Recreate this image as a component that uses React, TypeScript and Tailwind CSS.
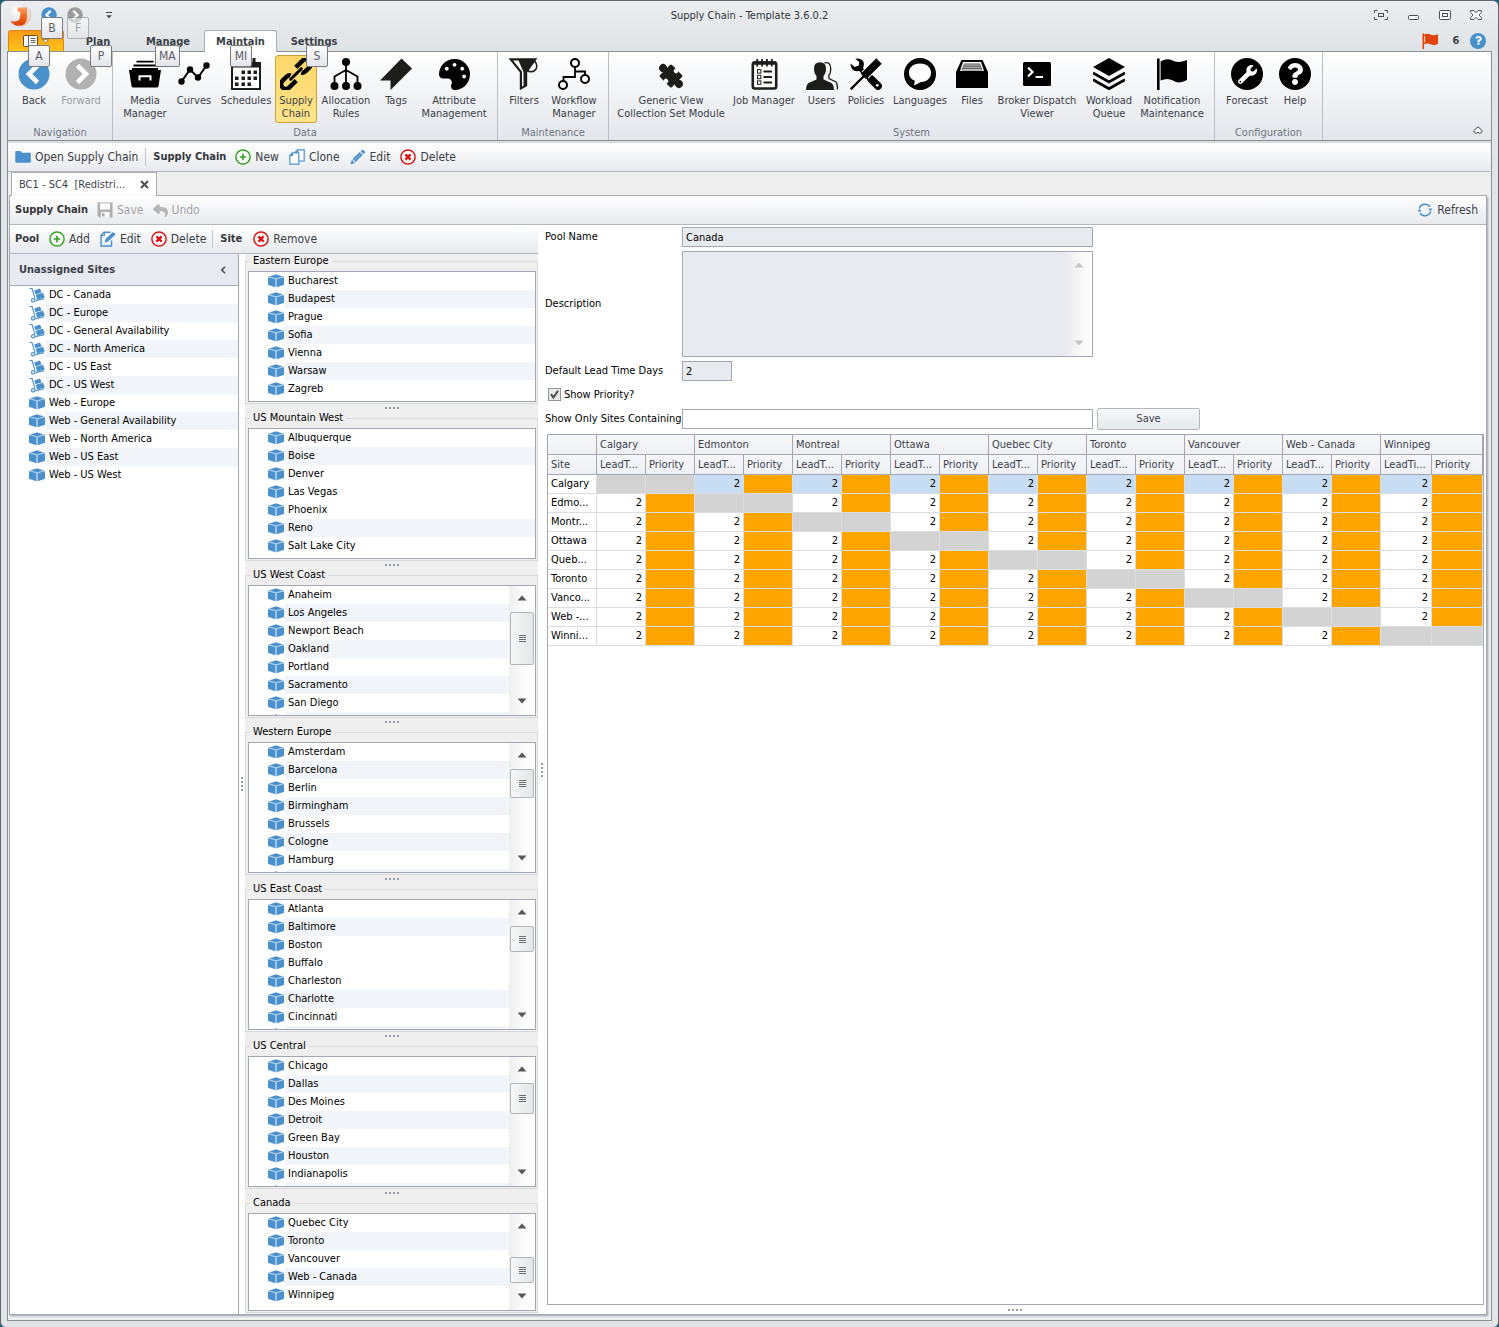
import type { ReactNode } from "react";
import { FaPalette, FaWrench, FaQuestion, FaReply } from "react-icons/fa";

const BLUE = "#4a90cc";

/* ---------- small icons ---------- */

function Cube() {
  return (
    <svg viewBox="0 0 16 16" className="h-4 w-4 shrink-0">
      <path d="M8 1.2 15.6 3.6 15.6 12 8 14.4 0.4 12 0.4 3.6Z" fill="#b3d0ea" />
      <path d="M8 1.5 14.4 3.4 8 5.3 1.6 3.4Z" fill={BLUE} />
      <path d="M0 4.2 7.2 6.2V14L0 11.8Z" fill={BLUE} />
      <path d="M16 4.2 8.8 6.2V14L16 11.8Z" fill={BLUE} />
    </svg>
  );
}

function HandTruck() {
  return (
    <svg viewBox="0 0 16 16" className="h-4 w-4 shrink-0">
      <path d="M0.5 1.5H3L6 11.5" fill="none" stroke={BLUE} strokeWidth="1.1" />
      <circle cx="4.2" cy="13.3" r="1.7" fill="none" stroke={BLUE} strokeWidth="1.2" />
      <path d="M6.3 13.6 15 11.6" stroke={BLUE} strokeWidth="1.2" />
      <path d="M5.3 3.4 11 1.6 12.6 5.4 6.5 7.2Z" fill={BLUE} />
      <path d="M6.8 7.8 14 5.8 15.8 10.6 8 12.6Z" fill={BLUE} />
    </svg>
  );
}

function PlusCircle() {
  return (
    <svg viewBox="0 0 16 16" className="h-4 w-4 shrink-0">
      <circle cx="8" cy="8" r="7.1" fill="#fff" stroke="#35a320" strokeWidth="1.5" />
      <path d="M8 4.8V11.2M4.8 8H11.2" stroke="#35a320" strokeWidth="1.7" />
    </svg>
  );
}

function CrossCircle() {
  return (
    <svg viewBox="0 0 16 16" className="h-4 w-4 shrink-0">
      <circle cx="8" cy="8" r="7.1" fill="#fff" stroke="#dd1111" strokeWidth="1.5" />
      <path d="M5.4 5.4 10.6 10.6M10.6 5.4 5.4 10.6" stroke="#dd1111" strokeWidth="2.4" />
    </svg>
  );
}

function Folder() {
  return (
    <svg viewBox="0 0 16 16" className="h-4 w-4 shrink-0">
      <path d="M0.3 3Q0.3 2 1.3 2H5.5L7 3.8H14.8Q15.8 3.8 15.8 4.8V12.8Q15.8 13.8 14.8 13.8H1.3Q0.3 13.8 0.3 12.8Z" fill={BLUE} />
    </svg>
  );
}

function Copy() {
  return (
    <svg viewBox="0 0 16 16" className="h-4 w-4 shrink-0" fill="#fff" stroke={BLUE} strokeWidth="1.2">
      <path d="M8.6 0.8H15.2V12H6.2V3.2Z" />
      <path d="M6.2 3.2H8.6V0.8" fill="none" />
      <path d="M3.4 3.8H9.8V15.2H0.8V6.4Z" />
      <path d="M0.8 6.4H3.4V3.8" fill="none" />
    </svg>
  );
}

function Pencil() {
  return (
    <svg viewBox="0 0 16 16" className="h-4 w-4 shrink-0">
      <path d="M0.4 15.4 1.8 10.8 4.9 13.9Z" fill={BLUE} />
      <path d="M2.6 10 9.8 3 12.7 5.9 5.6 13Z" fill={BLUE} />
      <path d="M10.6 2.2 12 0.9Q12.7 0.4 13.4 1L14.9 2.4Q15.4 3.1 14.9 3.8L13.5 5.1Z" fill={BLUE} />
      <path d="M4 11.6 11.2 4.5" stroke="#8fbce2" strokeWidth="0.8" />
    </svg>
  );
}

function EditPage() {
  return (
    <svg viewBox="0 0 16 16" className="h-4 w-4 shrink-0">
      <path d="M10.5 1.2H4.2L1 4.4V15H11.5V9.5" fill="none" stroke={BLUE} strokeWidth="1.4" />
      <path d="M1 4.6H4.4V1.2" fill="none" stroke={BLUE} strokeWidth="1" />
      <path d="M4.6 11.4 5.6 8 12.3 1.6Q13.2 1 14 1.7L14.8 2.6Q15.4 3.4 14.7 4.2L8 10.5Z" fill={BLUE} />
    </svg>
  );
}

function Floppy() {
  return (
    <svg viewBox="0 0 16 16" className="h-4 w-4 shrink-0">
      <path d="M0.5 0.5H15.5V15.5H2.5L0.5 13.5Z" fill="#b0b0b0" />
      <rect x="3" y="1.5" width="10" height="6" fill="#fff" />
      <rect x="4" y="10" width="8.5" height="5.5" fill="#fff" />
      <rect x="5" y="11" width="2.5" height="3.5" fill="#b0b0b0" />
    </svg>
  );
}

function RefreshIcon() {
  return (
    <svg viewBox="0 0 16 16" className="h-4 w-4 shrink-0" fill="none" stroke={BLUE} strokeWidth="1.6">
      <path d="M2.3 6.6A6 6 0 0 1 13 4.8" />
      <path d="M13.7 9.4A6 6 0 0 1 3 11.2" />
      <path d="M11.2 6.4H15.6L13.6 9Z" fill={BLUE} stroke="none" />
      <path d="M4.8 9.6H0.4L2.4 7Z" fill={BLUE} stroke="none" />
    </svg>
  );
}

function Arrow({ color, dir, className }: { color: string; dir: "left" | "right"; className: string }) {
  return (
    <svg viewBox="0 0 32 32" className={className}>
      <circle cx="16" cy="16" r="15.5" fill={color} />
      <path d={dir === "left" ? "M19.5 7.5 11 16 19.5 24.5" : "M12.5 7.5 21 16 12.5 24.5"} fill="none" stroke="#fff" strokeWidth="4.6" />
    </svg>
  );
}

/* ---------- ribbon icons (32px) ---------- */

function Big({ children }: { children: ReactNode }) {
  return (
    <svg viewBox="0 0 32 32" className="h-8 w-8 shrink-0">
      {children}
    </svg>
  );
}

const icons: Record<string, ReactNode> = {
  media: (
    <Big>
      <path d="M7.5 2.8H24.5V4.4H7.5ZM4.5 6.4H27.5V8.4H4.5Z" />
      <path d="M3 10H29V12H32L29.5 28Q29.3 29.5 27.8 29.5H4.2Q2.7 29.5 2.5 28L0 12H3Z" />
      <path d="M10.5 22.5V18.3H21.5V22.5" fill="none" stroke="#fff" strokeWidth="2" />
    </Big>
  ),
  curves: (
    <Big>
      <path d="M3.5 23.5 12 11.5 20 19.5 28.5 7.5" fill="none" stroke="#000" strokeWidth="2" />
      <circle cx="3.5" cy="23.5" r="3.2" />
      <circle cx="12" cy="11.5" r="3.2" />
      <circle cx="20" cy="19.5" r="3.2" />
      <circle cx="28.5" cy="7.5" r="3.2" />
    </Big>
  ),
  schedules: (
    <Big>
      <path d="M2 5H30V31H2Z" fill="#fff" stroke="#1d1d1b" strokeWidth="2" />
      <path d="M1 4H31V9.5H1Z" fill="#1d1d1b" />
      <path d="M7 0H10V6H7ZM22.5 0H25.5V6H22.5Z" fill="#1d1d1b" />
      <path
        d="M11.5 12.5h3.5v3.5h-3.5zM17.5 12.5h3.5v3.5h-3.5zM23.5 12.5h3.5v3.5h-3.5zM5 18.5h3.5v3.5h-3.5zM11.5 18.5h3.5v3.5h-3.5zM17.5 18.5h3.5v3.5h-3.5zM23.5 18.5h3.5v3.5h-3.5zM5 24.5h3.5v3.5h-3.5zM11.5 24.5h3.5v3.5h-3.5zM17.5 24.5h3.5v3.5h-3.5z"
        fill="#1d1d1b"
      />
    </Big>
  ),
  chain: (
    <Big>
      <g fill="none" stroke="#000" strokeWidth="4.4" transform="rotate(-45 16 16)">
        <path d="M11.5 20.8H1.5Q-3 20.5 -3 16T1.5 11.2H7.5Q10.5 11.5 11.2 13.2" />
        <path d="M20.5 11.2H30.5Q35 11.5 35 16T30.5 20.8H24.5Q21.5 20.5 20.8 18.8" />
        <path d="M8.5 16H23.5" strokeWidth="3" strokeLinecap="round" />
      </g>
    </Big>
  ),
  allocation: (
    <Big>
      <path d="M16 4V28M16 12 4.5 18.5V28M16 12 27.5 18.5V28" fill="none" stroke="#000" strokeWidth="1.8" />
      <circle cx="16" cy="4" r="4" />
      <circle cx="4.5" cy="28" r="4" />
      <circle cx="16" cy="28" r="4" />
      <circle cx="27.5" cy="28" r="4" />
    </Big>
  ),
  tags: (
    <Big>
      <path d="M21.5 0.5 32 10.5 10.5 32V22.5H0Z" fill="#1d1d1b" />
    </Big>
  ),
  palette: (
    <span className="flex h-8 w-8 items-center justify-center">
      <FaPalette size={31} color="#000" className="-scale-x-100" />
    </span>
  ),
  filters: (
    <Big>
      <circle cx="23" cy="8" r="5.8" fill="none" stroke="#1d1d1b" strokeWidth="1.5" />
      <path d="M2 1H28L18.5 14V27.5L12.5 31V14Z" fill="#1d1d1b" stroke="#1d1d1b" strokeWidth="1.4" />
      <path d="M5 2.5H10.5L15.5 14V27.8L14 28.6V13.6Z" fill="#fff" />
    </Big>
  ),
  workflow: (
    <Big>
      <path d="M17 9V19H5.5V23M17 13.5H27V17" fill="none" stroke="#000" strokeWidth="1.8" />
      <g fill="#fff" stroke="#000" strokeWidth="2">
        <circle cx="17" cy="5" r="4" />
        <circle cx="5" cy="27" r="4" />
        <circle cx="27" cy="21" r="4" />
      </g>
    </Big>
  ),
  puzzle: (
    <Big>
      <g transform="rotate(-45 16 18)" fill="#1d1d1b">
        <rect x="7.5" y="9.5" width="17" height="17" rx="1.5" />
        <circle cx="16" cy="6.8" r="4" />
        <circle cx="16" cy="29.2" r="4" />
        <circle cx="8.8" cy="18" r="2.4" fill="#f6f7f9" />
        <circle cx="23.2" cy="18" r="2.4" fill="#f6f7f9" />
      </g>
    </Big>
  ),
  jobs: (
    <Big>
      <rect x="4.8" y="4.5" width="23.4" height="26" rx="2" fill="#fff" stroke="#1d1d1b" strokeWidth="2.6" />
      <path d="M5 5H28" stroke="#1d1d1b" strokeWidth="3.5" />
      <path d="M9.2 1V8.5M14 1V8.5M19 1V8.5M23.8 1V8.5" stroke="#1d1d1b" strokeWidth="1.8" />
      <path d="M15.5 13.5H24M15.5 19H24M15.5 24.5H24" stroke="#1d1d1b" strokeWidth="2" />
      <g fill="none" stroke="#1d1d1b">
        <rect x="9.5" y="11.7" width="3.4" height="3.4" />
        <rect x="9.5" y="17.3" width="3.4" height="3.4" />
        <rect x="9.5" y="22.9" width="3.4" height="3.4" />
      </g>
    </Big>
  ),
  users: (
    <Big>
      <path
        d="M18.5 4.8Q24.5 3.5 24.7 10.5 24.8 15.5 22.8 17.3L23 20.5 30 24Q31.4 25.5 31.4 31.5"
        fill="none"
        stroke="#1d1d1b"
        strokeWidth="1.3"
      />
      <path
        d="M14 4.2Q20 4.2 20 10.5 20 15.5 17.5 18V21.5L25 24.8Q28 26.5 28 32H0Q0 26.5 3 24.8L10.5 21.5V18Q8 15.5 8 10.5 8 4.2 14 4.2Z"
        fill="#1d1d1b"
      />
    </Big>
  ),
  policies: (
    <Big>
      <path d="M8.5 9 26.5 26.5" stroke="#000" strokeWidth="4.6" />
      <path d="M21 21 28 28" stroke="#000" strokeWidth="7.6" strokeLinecap="round" />
      <path d="M5.4 0.8Q11.5 -0.4 13.6 4.3 14.6 8.6 11.8 11.4 8.2 14 4.4 12.8 0.8 11.2 0.4 5.6L4.6 9 8.8 7.4 9.2 4Z" />
      <path d="M3 29 16 16" stroke="#fff" strokeWidth="4.5" />
      <path d="M0.8 31.2 16 16" stroke="#000" strokeWidth="2.4" />
      <path d="M15 17 28 4" stroke="#fff" strokeWidth="9.6" />
      <path d="M13.5 18.5 29 3" stroke="#000" strokeWidth="7.6" />
      <circle cx="27.3" cy="27.3" r="1.4" fill="#fff" />
    </Big>
  ),
  languages: (
    <Big>
      <circle cx="16" cy="16" r="16" />
      <path d="M16 5.5C23 5.5 27 9.5 27 14.7S23 24 17 24L10 27.5 10.8 22.8C7 21.3 5 18.5 5 14.7 5 9.5 9 5.5 16 5.5Z" fill="#fff" />
    </Big>
  ),
  files: (
    <Big>
      <path d="M5.5 2H26.5L32 14V30H0V14Z" />
      <path d="M7 4H25L28 13H4Z" fill="#fff" />
      <path d="M8 5.5H24L26.5 12.5H5.5Z" fill="#555" />
      <path d="M8 7H24M7.4 9.2H24.6M6.6 11.4H25.4" stroke="#ccc" />
    </Big>
  ),
  terminal: (
    <Big>
      <rect x="2" y="4" width="28" height="24" rx="1.5" />
      <path d="M7 9.5 11.5 14 7 18.5M14.5 19H22" fill="none" stroke="#fff" strokeWidth="2.2" />
    </Big>
  ),
  layers: (
    <Big>
      <path d="M16 0 32 9 16 18 0 9Z" />
      <path d="M0 15 16 24 32 15M0 21.7 16 30.7 32 21.7" fill="none" stroke="#000" strokeWidth="2.8" />
    </Big>
  ),
  flag: (
    <Big>
      <path d="M1 0.5H3.6V32H1Z" />
      <path d="M4.6 3.5Q11-0.5 16.5 2.5 22 5.5 31 2V22Q23 26.5 17 22.5 11.5 19.5 4.6 22.5Z" />
    </Big>
  ),
  forecast: (
    <span className="flex h-8 w-8 items-center justify-center rounded-full bg-black">
      <FaWrench size={19} color="#fff" />
    </span>
  ),
  help: (
    <span className="flex h-8 w-8 items-center justify-center rounded-full bg-black">
      <FaQuestion size={22} color="#fff" />
    </span>
  ),
  back: <Arrow color={BLUE} dir="left" className="h-8 w-8 shrink-0" />,
  forward: <Arrow color="#b1b1b1" dir="right" className="h-8 w-8 shrink-0" />,
};

/* ---------- ribbon ---------- */

type Item = { icon: string; lines: string[]; w: string; on?: boolean; off?: boolean };

const groups: { name: string; w: string; pad: string; items: Item[] }[] = [
  {
    name: "Navigation",
    w: "w-[105px]",
    pad: "pl-[2px]",
    items: [
      { icon: "back", lines: ["Back"], w: "w-12" },
      { icon: "forward", lines: ["Forward"], w: "w-[46px]", off: true },
    ],
  },
  {
    name: "Data",
    w: "w-[385px]",
    pad: "pl-[7px]",
    items: [
      { icon: "media", lines: ["Media", "Manager"], w: "w-[50px]" },
      { icon: "curves", lines: ["Curves"], w: "w-12" },
      { icon: "schedules", lines: ["Schedules"], w: "w-[56px]" },
      { icon: "chain", lines: ["Supply", "Chain"], w: "w-[42px] mx-px", on: true },
      { icon: "allocation", lines: ["Allocation", "Rules"], w: "w-[56px]" },
      { icon: "tags", lines: ["Tags"], w: "w-11" },
      { icon: "palette", lines: ["Attribute", "Management"], w: "w-[72px]" },
    ],
  },
  {
    name: "Maintenance",
    w: "w-[111px]",
    pad: "pl-[6px]",
    items: [
      { icon: "filters", lines: ["Filters"], w: "w-10" },
      { icon: "workflow", lines: ["Workflow", "Manager"], w: "w-[60px]" },
    ],
  },
  {
    name: "System",
    w: "w-[606px]",
    pad: "pl-[3px]",
    items: [
      { icon: "puzzle", lines: ["Generic View", "Collection Set Module"], w: "w-[118px]" },
      { icon: "jobs", lines: ["Job Manager"], w: "w-[68px]" },
      { icon: "users", lines: ["Users"], w: "w-[47px]" },
      { icon: "policies", lines: ["Policies"], w: "w-[42px]" },
      { icon: "languages", lines: ["Languages"], w: "w-[66px]" },
      { icon: "files", lines: ["Files"], w: "w-[38px]" },
      { icon: "terminal", lines: ["Broker Dispatch", "Viewer"], w: "w-[92px]" },
      { icon: "layers", lines: ["Workload", "Queue"], w: "w-[52px]" },
      { icon: "flag", lines: ["Notification", "Maintenance"], w: "w-[74px]" },
    ],
  },
  {
    name: "Configuration",
    w: "w-[108px]",
    pad: "pl-[6px]",
    items: [
      { icon: "forecast", lines: ["Forecast"], w: "w-[52px]" },
      { icon: "help", lines: ["Help"], w: "w-11" },
    ],
  },
];

function RibbonItem({ item }: { item: Item }) {
  return (
    <button
      disabled={item.off}
      className={
        "flex h-[68px] shrink-0 flex-col items-center rounded-[3px] border pt-[2px] leading-[13px] " +
        item.w +
        (item.on ? " border-[#c9a13c] bg-gradient-to-b from-[#fdd667] to-[#fee48a]" : " border-transparent") +
        (item.off ? " text-[#9a9da1]" : " text-[#3b3f4a]")
      }
    >
      {icons[item.icon]}
      <span className="mt-1 flex flex-col items-center whitespace-nowrap">
        {item.lines.map((l) => (
          <span key={l}>{l}</span>
        ))}
      </span>
    </button>
  );
}

function Ribbon() {
  return (
    <section className="relative flex h-[89px] border-b border-[#8b9095] bg-gradient-to-b from-white to-[#e3e6eb]">
      {groups.map((g) => (
        <div key={g.name} className={"flex shrink-0 flex-col border-r border-[#b9bec5] pt-[3px] " + g.w}>
          <div className={"flex " + g.pad}>
            {g.items.map((i) => (
              <RibbonItem key={i.icon} item={i} />
            ))}
          </div>
          <div className="mt-[3px] text-center leading-[13px] text-[#6d7585]">{g.name}</div>
        </div>
      ))}
      <button aria-label="Collapse ribbon" className="absolute right-2 bottom-1.5">
        <svg viewBox="0 0 10 8" className="h-2 w-2.5" fill="#fff" stroke="#3b3f4a">
          <path d="M5 0.8 9.3 4.8 7.6 7.2H6.2L5 6 3.8 7.2H2.4L0.7 4.8Z" />
        </svg>
      </button>
    </section>
  );
}

function KeyTip({ label, className }: { label: string; className: string }) {
  return (
    <span
      className={
        "absolute z-10 flex h-[22px] min-w-[22px] items-center justify-center rounded-[2px] border border-[#777b80] bg-gradient-to-b from-white to-[#e4e5ea] px-[3px] text-[12px] text-[#5c5f66] " +
        className
      }
    >
      {label}
    </span>
  );
}

const tabs = [
  { label: "Plan", w: "w-[68px]", tip: "P", tipPos: "left-[26px]" },
  { label: "Manage", w: "w-[72px]", tip: "MA", tipPos: "left-[23px]" },
  { label: "Maintain", w: "w-[73px]", tip: "MI", tipPos: "left-[25px]", on: true },
  { label: "Settings", w: "w-[74px]", tip: "S", tipPos: "left-[29px]" },
];

function TitleBar() {
  return (
    <header className="relative flex h-[29px] items-center justify-center text-[#2f3338]">
      <div className="absolute top-0 left-0 flex h-full w-[120px]">
        <svg viewBox="0 0 24 24" className="mt-[2px] ml-[7px] h-6 w-6">
          <defs>
            <radialGradient id="orb" cx="0.35" cy="0.3" r="0.8">
              <stop offset="0" stopColor="#ffffff" />
              <stop offset="0.7" stopColor="#e0dee0" />
              <stop offset="1" stopColor="#e9b9a0" />
            </radialGradient>
            <linearGradient id="orbMark" x1="0" y1="0" x2="0" y2="1">
              <stop offset="0" stopColor="#f9a066" />
              <stop offset="0.5" stopColor="#f26a1d" />
              <stop offset="1" stopColor="#d63c06" />
            </linearGradient>
          </defs>
          <circle cx="12" cy="12" r="11.5" fill="url(#orb)" />
          <path d="M9.5 4.5H19V15Q18.5 22.5 11 22.8 5 22.5 2.5 18 8.5 19.5 11.5 16.5 12.5 14 12.2 9 11 8.5 9.5 8Z" fill="url(#orbMark)" />
        </svg>
        <button aria-label="Back" className="mt-[6px] ml-[9px] h-4 w-4">
          <Arrow color={BLUE} dir="left" className="h-4 w-4" />
        </button>
        <button aria-label="Forward" className="mt-[6px] ml-[10px] h-4 w-4">
          <Arrow color="#9c9c9c" dir="right" className="h-4 w-4" />
        </button>
        <button aria-label="Customize quick access" className="mt-[10px] ml-[22px] h-2 w-2">
          <svg viewBox="0 0 8 8" className="h-2 w-2">
            <path d="M1 1.5H7" stroke="#444" />
            <path d="M1.2 4.2H6.8L4 7.2Z" fill="#444" />
          </svg>
        </button>
        <KeyTip label="B" className="top-4 left-10" />
        <KeyTip label="F" className="top-4 left-[66px] opacity-50" />
      </div>
      <h1>Supply Chain - Template 3.6.0.2</h1>
      <div className="absolute top-0 right-4 flex h-[27px] items-center gap-[19px]">
        <button aria-label="Full screen">
          <svg viewBox="0 0 14 10" className="h-2.5 w-3.5" fill="none" stroke="#4a4e53">
            <path d="M3.5 0.5H0.5V3M0.5 7V9.5H3.5M10.5 0.5H13.5V3M13.5 7V9.5H10.5" />
            <rect x="4.5" y="3.5" width="5" height="3" />
          </svg>
        </button>
        <button aria-label="Minimize">
          <svg viewBox="0 0 13 10" className="h-2.5 w-[13px]" fill="#fff" stroke="#4a4e53">
            <rect x="1.5" y="5.5" width="10" height="4" rx="1.2" />
          </svg>
        </button>
        <button aria-label="Maximize">
          <svg viewBox="0 0 12 10" className="h-2.5 w-3" fill="#fff" stroke="#4a4e53">
            <rect x="0.5" y="0.5" width="11" height="9" rx="1" />
            <rect x="3.5" y="3.5" width="5" height="3" />
          </svg>
        </button>
        <button aria-label="Close">
          <svg viewBox="0 0 12 10" className="h-2.5 w-3" fill="#fff" stroke="#4a4e53">
            <path d="M0.6 0.6H4L6 2.8 8 0.6H11.4V2.4L9 5 11.4 7.6V9.4H8L6 7.2 4 9.4H0.6V7.6L3 5 0.6 2.4Z" />
          </svg>
        </button>
      </div>
    </header>
  );
}

function TabBar() {
  return (
    <nav className="flex h-[21px] font-bold text-[#3b3f46]">
      <button
        aria-label="Application menu"
        className="relative flex w-14 items-center justify-center gap-1 rounded-t-[3px] border border-b-0 border-[#d9861b] bg-gradient-to-b from-[#fa9a13] to-[#ffc31a]"
      >
        <svg viewBox="0 0 15 12" className="h-3 w-[15px]">
          <rect x="0.5" y="0.5" width="14" height="11" rx="1" fill="#fff" stroke="#6b4a1c" />
          <path d="M5.5 0.5V11.5M7.5 3.5H12.5M7.5 5.5H12.5M7.5 7.5H12.5" stroke="#6a6a6a" />
        </svg>
        <svg viewBox="0 0 7 5" className="h-[5px] w-[7px]">
          <path d="M0.7 0.7H6.3L3.5 4.2Z" fill="#fff" stroke="#8a5a10" strokeWidth="0.7" />
        </svg>
        <KeyTip label="A" className="top-[14px] left-[19px] font-normal" />
      </button>
      {tabs.map((t) => (
        <button
          key={t.label}
          className={
            "relative " +
            t.w +
            (t.on ? " z-10 -mb-px rounded-t-[3px] border border-b-0 border-[#a9adb4] bg-white pt-px" : " pt-[2px]")
          }
        >
          {t.label}
          <KeyTip label={t.tip} className={(t.on ? "top-[14px]" : "top-[15px]") + " font-normal " + t.tipPos} />
        </button>
      ))}
      <div className="ml-auto flex items-center gap-2 pr-[5px]">
        <svg viewBox="0 0 16 16" className="h-4 w-4">
          <path d="M0.5 0.5H2V16H0.5Z" fill="#e04408" />
          <path d="M2 1.5Q5.5-0.2 8.5 1.5 11.5 3 16 1.2V11Q12 13 8.5 11.2 5.5 9.8 2 11.2Z" fill="#e04408" />
          <path d="M2.6 3V9.5" stroke="#fff" strokeWidth="0.8" />
        </svg>
        <span className="-mr-1 w-5 text-center">6</span>
        <button aria-label="Help" className="flex h-4 w-4 items-center justify-center rounded-full bg-[#4a90cc] text-white">
          <FaQuestion size={9} />
        </button>
      </div>
    </nav>
  );
}

/* ---------- toolbars ---------- */

function Tool({ icon, label, off }: { icon: ReactNode; label: string; off?: boolean }) {
  return (
    <button disabled={off} className={"flex items-center gap-1 text-[12px] whitespace-nowrap " + (off ? "text-[#a3a3a3]" : "text-[#3b3f46]")}>
      {icon}
      {label}
    </button>
  );
}

function Separator() {
  return <span className="h-[18px] w-px shrink-0 bg-[#c3c7cc]" />;
}

const bar = "flex h-[29px] shrink-0 items-center border-b border-[#b3b7bd] bg-gradient-to-b from-white to-[#e8eaee]";
const barTitle = "text-[11px] font-bold whitespace-nowrap text-[#33363b]";

/* ---------- lists ---------- */

type Pool = { name: string; sites: string[]; next?: boolean; thumb?: string; h?: string; plain?: number[] };

const pools: Pool[] = [
  { name: "Eastern Europe", sites: ["Bucharest", "Budapest", "Prague", "Sofia", "Vienna", "Warsaw", "Zagreb"] },
  {
    name: "US Mountain West",
    sites: ["Albuquerque", "Boise", "Denver", "Las Vegas", "Phoenix", "Reno", "Salt Lake City"],
    plain: [3],
  },
  {
    name: "US West Coast",
    sites: ["Anaheim", "Los Angeles", "Newport Beach", "Oakland", "Portland", "Sacramento", "San Diego"],
    next: true,
    thumb: "mt-[6px] h-[53px]",
  },
  {
    name: "Western Europe",
    sites: ["Amsterdam", "Barcelona", "Berlin", "Birmingham", "Brussels", "Cologne", "Hamburg"],
    next: true,
    thumb: "mt-[6px] h-[29px]",
  },
  {
    name: "US East Coast",
    sites: ["Atlanta", "Baltimore", "Boston", "Buffalo", "Charleston", "Charlotte", "Cincinnati"],
    next: true,
    thumb: "mt-[6px] h-[26px]",
    plain: [3],
  },
  {
    name: "US Central",
    sites: ["Chicago", "Dallas", "Des Moines", "Detroit", "Green Bay", "Houston", "Indianapolis"],
    next: true,
    thumb: "mt-[6px] h-[31px]",
  },
  {
    name: "Canada",
    sites: ["Quebec City", "Toronto", "Vancouver", "Web - Canada", "Winnipeg"],
    thumb: "mt-[23px] h-[26px]",
    h: "h-[98px]",
  },
];

const unassigned = [
  "DC - Canada",
  "DC - Europe",
  "DC - General Availability",
  "DC - North America",
  "DC - US East",
  "DC - US West",
  "Web - Europe",
  "Web - General Availability",
  "Web - North America",
  "Web - US East",
  "Web - US West",
];

function SiteRow({ name, tinted, truck }: { name: string; tinted: boolean; truck?: boolean }) {
  return (
    <li className="flex h-[18px] items-center text-black">
      {truck ? <HandTruck /> : <Cube />}
      <span className={"ml-px h-[18px] flex-1 pl-[3px] leading-[18px] whitespace-nowrap " + (tinted ? "bg-[#f1f4f9]" : "")}>{name}</span>
    </li>
  );
}

function Triangle({ up, color }: { up?: boolean; color: string }) {
  return (
    <svg viewBox="0 0 10 6" className="h-1.5 w-2.5">
      <path d={up ? "M5 0.5 9.5 5.5H0.5Z" : "M0.5 0.5H9.5L5 5.5Z"} fill={color} />
    </svg>
  );
}

function ScrollTrack({ thumb }: { thumb: string }) {
  return (
    <div className="flex w-[26px] shrink-0 flex-col items-center bg-gradient-to-r from-[#eeeeee] via-[#fafafa] to-white pt-[9px] pb-[11px]">
      <button aria-label="Scroll up" className="flex pb-[5px]">
        <Triangle up color="#55585c" />
      </button>
      <div
        className={
          "flex w-6 shrink-0 flex-col items-center justify-center gap-px rounded-[2px] border border-[#b0b4b9] bg-gradient-to-r from-[#f7f8f8] to-[#e3e5e6] " +
          thumb
        }
      >
        <span className="h-px w-[7px] bg-[#6b6f74]" />
        <span className="h-px w-[7px] bg-[#6b6f74]" />
        <span className="h-px w-[7px] bg-[#6b6f74]" />
        <span className="h-px w-[7px] bg-[#6b6f74]" />
      </div>
      <button aria-label="Scroll down" className="mt-auto flex">
        <Triangle color="#55585c" />
      </button>
    </div>
  );
}

function Dots({ vertical }: { vertical?: boolean }) {
  return (
    <div className={"flex gap-[2px] " + (vertical ? "flex-col" : "justify-center")}>
      {[0, 1, 2, 3].map((i) => (
        <span key={i} className="h-[2px] w-[2px] bg-[#979ca6]" />
      ))}
    </div>
  );
}

function PoolBox({ pool, last }: { pool: Pool; last: boolean }) {
  return (
    <>
      <fieldset className="min-w-0 border border-[#d9dadb] pr-px pb-px pl-[2px]">
        <legend className="ml-[2px] h-[14px] px-[3px] leading-[14px] text-black">{pool.name}</legend>
        <div className={"mt-[3px] flex overflow-hidden border border-[#a2a7b3] bg-white " + (pool.h ?? "h-[131px]")}>
          <ul className="flex-1 pl-[19px]">
            {pool.sites.map((s, i) => (
              <SiteRow key={s} name={s} tinted={i % 2 === 1 && !pool.plain?.includes(i)} />
            ))}
            {pool.next && <SiteRow name="" tinted />}
          </ul>
          {pool.thumb && <ScrollTrack thumb={pool.thumb} />}
        </div>
      </fieldset>
      {!last && (
        <div className="flex h-[7px] items-center justify-center">
          <Dots />
        </div>
      )}
    </>
  );
}

/* ---------- lead time table ---------- */

const cities = ["Calgary", "Edmonton", "Montreal", "Ottawa", "Quebec City", "Toronto", "Vancouver", "Web - Canada", "Winnipeg"];
const rowLabels = ["Calgary", "Edmo...", "Montr...", "Ottawa", "Queb...", "Toronto", "Vanco...", "Web -...", "Winni..."];

const th = "whitespace-nowrap border-r border-b border-[#a2a7b3] bg-gradient-to-b from-[#f6f7fa] to-[#eef0f4] px-[3px] text-left font-normal text-[#3b3f4a]";
const td = "whitespace-nowrap border-r border-b border-[#dcdde0] p-0 px-[3px]";

function LeadTimes() {
  return (
    <table className="w-full table-fixed border-separate border-spacing-0 leading-[18px]">
      <colgroup>
        <col className="w-[49px]" />
        {cities.slice(0, 8).flatMap((c) => [<col key={c + "l"} className="w-[49px]" />, <col key={c + "p"} className="w-[49px]" />])}
        <col />
        <col />
      </colgroup>
      <thead>
        <tr className="h-5">
          <th className={th} />
          {cities.map((c) => (
            <th key={c} colSpan={2} scope="colgroup" className={th}>
              {c}
            </th>
          ))}
        </tr>
        <tr className="h-5">
          <th scope="col" className={th}>
            Site
          </th>
          {cities.flatMap((c, i) => [
            <th key={c + "l"} scope="col" className={th}>
              {i === 8 ? "LeadTi..." : "LeadT..."}
            </th>,
            <th key={c + "p"} scope="col" className={th}>
              Priority
            </th>,
          ])}
        </tr>
      </thead>
      <tbody>
        {cities.map((row, r) => (
          <tr key={row} className="h-[19px]">
            <th scope="row" title={row} className={td + " text-left font-normal text-black"}>
              {rowLabels[r]}
            </th>
            {cities.flatMap((c, k) =>
              k === r
                ? [<td key={c + "l"} className={td + " bg-[#d3d3d3]"} />, <td key={c + "p"} className={td + " bg-[#d3d3d3]"} />]
                : [
                    <td key={c + "l"} className={td + " text-right text-black" + (r === 0 ? " bg-[#c7ddf4]" : "")}>
                      2
                    </td>,
                    <td key={c + "p"} className={td + " bg-[#ffa500]"} />,
                  ],
            )}
          </tr>
        ))}
      </tbody>
    </table>
  );
}

const field = "h-5 border border-[#a2a7b3] px-[3px] text-black outline-none";

function Details() {
  return (
    <main className="flex min-w-0 flex-1 flex-col pr-[2px] text-black">
      <div className="grid grid-cols-[137px_411px_auto] items-center justify-start gap-y-1 pt-[2px] whitespace-nowrap">
        <label htmlFor="pool">Pool Name</label>
        <input id="pool" readOnly defaultValue="Canada" className={field + " bg-[#e7eaef]"} />
        <span />
        <label htmlFor="desc">Description</label>
        <div className="flex h-[106px] border border-[#a2a7b3] bg-[#e7eaef]">
          <textarea id="desc" readOnly className="h-full flex-1 resize-none bg-transparent outline-none" />
          <div className="flex w-[26px] flex-col items-center justify-between bg-gradient-to-r from-[#ececee] to-white py-[10px]">
            <Triangle up color="#c3c5c8" />
            <Triangle color="#c3c5c8" />
          </div>
        </div>
        <span />
        <label htmlFor="lead">Default Lead Time Days</label>
        <input id="lead" readOnly defaultValue="2" className={field + " w-[50px] bg-[#e7eaef]"} />
        <span />
        <label className="col-span-3 flex h-[19px] items-center gap-[3px] pl-[3px]">
          <span className="relative flex h-[13px] w-[13px]">
            <input type="checkbox" defaultChecked className="peer h-[13px] w-[13px] appearance-none border border-[#8f949e] bg-[#e8e9eb]" />
            <svg viewBox="0 0 13 13" className="pointer-events-none absolute inset-0 hidden peer-checked:block">
              <path d="M3 6.2 5.4 9.6 10 2.8" fill="none" stroke="#4a4a4a" strokeWidth="2" />
            </svg>
          </span>
          Show Priority?
        </label>
        <label htmlFor="filter">Show Only Sites Containing</label>
        <input id="filter" className={field + " bg-white"} />
        <button className="ml-1 h-[22px] w-[103px] rounded-[2px] border border-[#b3b7bd] bg-gradient-to-b from-[#f7f8f9] to-[#e5e9eb] text-[#3b3f4a]">Save</button>
      </div>
      <div className="mt-1 ml-[2px] flex-1 border border-[#a2a7b3] bg-white">
        <LeadTimes />
      </div>
      <div className="flex h-[9px] items-center justify-center">
        <Dots />
      </div>
    </main>
  );
}

/* ---------- page ---------- */

export default function App() {
  return (
    <div className="flex min-h-screen bg-[#0b6478] font-['DejaVu_Sans_Condensed','DejaVu_Sans',sans-serif] text-[11px] leading-[14px]">
      <div className="flex min-w-0 flex-1 flex-col rounded-md border border-[#5d646b] bg-[#e1e5e8] bg-gradient-to-b from-[#eceef1] to-[#dfe3e6] bg-[length:100%_50px] bg-no-repeat px-[6px] pb-[6px]">
        <div className="-mx-[6px]">
          <TitleBar />
        </div>
        <div className="px-px">
          <TabBar />
        </div>
        <div className="flex flex-1 flex-col border border-[#8b9095] bg-[#efefef]">
          <Ribbon />
          <div className="h-[2px] bg-[#d9dcdf]" />
          <div className={bar + " mr-px pl-[7px]"}>
            <Tool icon={<Folder />} label="Open Supply Chain" />
            <span className="w-[7px]" />
            <Separator />
            <span className={barTitle + " w-[87px] pl-[7px]"}>Supply Chain</span>
            <div className="ml-[2px] flex gap-[10px]">
              <Tool icon={<PlusCircle />} label="New" />
              <Tool icon={<Copy />} label="Clone" />
              <Tool icon={<Pencil />} label="Edit" />
              <Tool icon={<CrossCircle />} label="Delete" />
            </div>
          </div>
          <div className="mr-1 ml-px flex h-6 items-end border-b border-[#a9adb8]">
            <div className="-mb-px ml-[2px] flex h-6 w-[146px] items-center border border-b-0 border-[#a9adb8] bg-white pl-[7px] text-[#3b3f4a]">
              <span className="w-[113px] whitespace-pre">BC1 - SC4  [Redistri...</span>
              <button aria-label="Close tab" className="ml-2">
                <svg viewBox="0 0 9 9" className="h-[9px] w-[9px]">
                  <path d="M1 1 8 8M8 1 1 8" stroke="#4a4e56" strokeWidth="2" />
                </svg>
              </button>
            </div>
          </div>
          <div className="mr-1 mb-[5px] ml-px flex flex-1 flex-col border-x border-b border-[#a2a7b3] bg-white shadow-[1px_1px_2px_#9a9fa8]">
            <div className={bar + " pr-2 pl-[5px]"}>
              <span className={barTitle + " w-[82px]"}>Supply Chain</span>
              <div className="flex flex-1 gap-[9px]">
                <Tool icon={<Floppy />} label="Save" off />
                <Tool icon={<FaReply size={15} color="#b5b5b5" />} label="Undo" off />
                <span className="flex-1" />
                <Tool icon={<RefreshIcon />} label="Refresh" />
              </div>
            </div>
            <div className="flex flex-1">
              <div className="flex w-[528px] shrink-0 flex-col">
                <div className={bar + " pl-[5px]"}>
                  <span className={barTitle + " w-[34px]"}>Pool</span>
                  <div className="flex gap-[10px]">
                    <Tool icon={<PlusCircle />} label="Add" />
                    <Tool icon={<EditPage />} label="Edit" />
                    <Tool icon={<CrossCircle />} label="Delete" />
                  </div>
                  <span className="w-[6px]" />
                  <Separator />
                  <span className={barTitle + " w-10 pl-[7px]"}>Site</span>
                  <Tool icon={<CrossCircle />} label="Remove" />
                </div>
                <div className="flex flex-1">
                  <aside className="flex w-[229px] shrink-0 flex-col border-r border-[#a2a7b3]">
                    <div className="flex h-8 items-center justify-between border-b border-[#a2a7b3] bg-[#e7eaf0] pr-3 pl-[9px]">
                      <h2 className="font-bold text-[#3b3f4a]">Unassigned Sites</h2>
                      <button aria-label="Collapse">
                        <svg viewBox="0 0 6 8" className="h-2 w-1.5">
                          <path d="M5 0.8 1.8 4 5 7.2" fill="none" stroke="#4a4e56" strokeWidth="1.6" />
                        </svg>
                      </button>
                    </div>
                    <ul className="pl-[19px]">
                      {unassigned.map((s, i) => (
                        <SiteRow key={s} name={s} tinted={i % 2 === 1} truck={s.startsWith("DC")} />
                      ))}
                    </ul>
                  </aside>
                  <div className="flex w-[6px] shrink-0 flex-col items-center justify-center">
                    <Dots vertical />
                  </div>
                  <section className="min-w-0 flex-1 bg-[#efefef] pb-px">
                    {pools.map((p, i) => (
                      <PoolBox key={p.name} pool={p} last={i === pools.length - 1} />
                    ))}
                  </section>
                </div>
              </div>
              <div className="flex w-[7px] shrink-0 flex-col items-center justify-center">
                <Dots vertical />
              </div>
              <Details />
            </div>
          </div>
        </div>
      </div>
    </div>
  );
}
